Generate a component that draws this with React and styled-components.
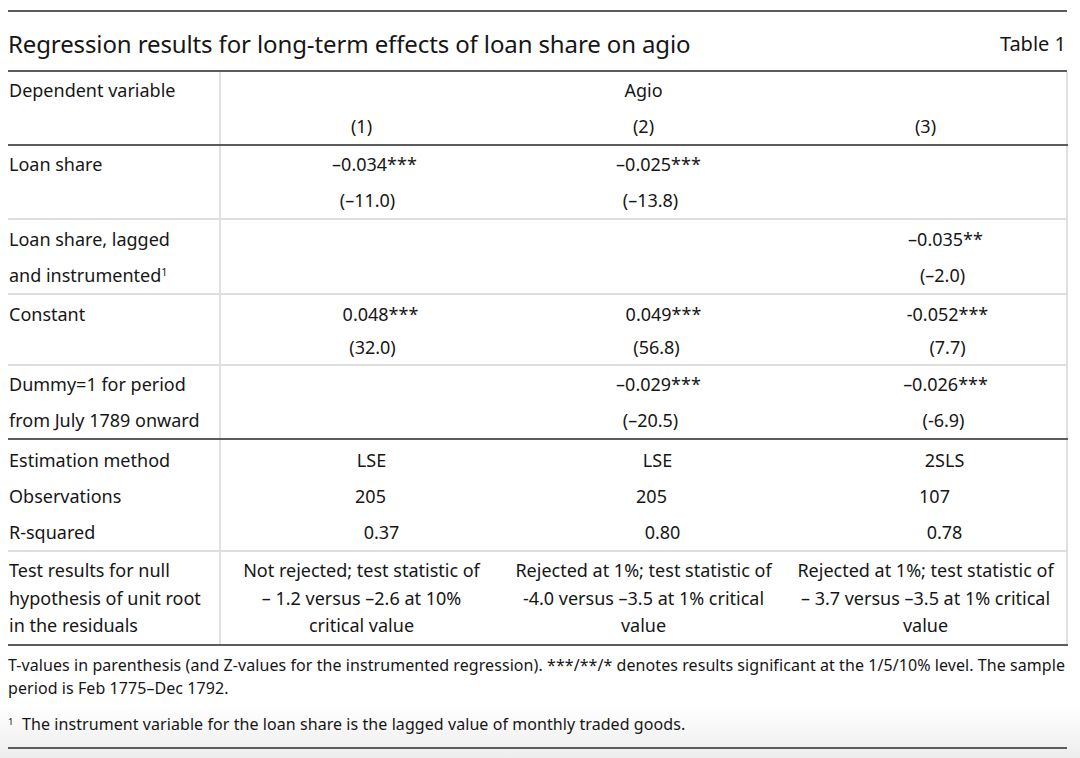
import React from 'react'
import styled, { createGlobalStyle } from 'styled-components'

// [text, shift] - shift nudges the centred value to the right like in the source table
const rows = [
  {
    label: ['Loan share'],
    lh: 36,
    pad: [0, 0],
    rule: 'light',
    cells: [
      [['–0.034***', 13], ['(–11.0)', 6]],
      [['–0.025***', 15], ['(–13.8)', 7]],
      [],
    ],
  },
  {
    label: ['Loan share, lagged', 'and instrumented'],
    note: '1',
    lh: 36,
    pad: [1, 0],
    rule: 'light',
    cells: [[], [], [['–0.035**', 20], ['(–2.0)', 17]]],
  },
  {
    label: ['Constant'],
    lh: 33,
    pad: [3, 0],
    rule: 'light',
    cells: [
      [['0.048***', 19], ['(32.0)', 11]],
      [['0.049***', 20], ['(56.8)', 13]],
      [['-0.052***', 22], ['(7.7)', 22]],
    ],
  },
  {
    label: ['Dummy=1 for period', 'from July 1789 onward'],
    lh: 36,
    pad: [0, 0],
    rule: 'dark',
    cells: [
      [],
      [['–0.029***', 15], ['(–20.5)', 7]],
      [['–0.026***', 20], ['(-6.9)', 18]],
    ],
  },
]

const stats = [
  { label: 'Estimation method', cells: [['LSE', 10], ['LSE', 14], ['2SLS', 19]] },
  { label: 'Observations', cells: [['205', 9], ['205', 8], ['107', 9]] },
  { label: 'R-squared', cells: [['0.37', 20], ['0.80', 19], ['0.78', 19]] },
]

const tests = [
  ['Not rejected; test statistic of', '– 1.2 versus –2.6 at 10%', 'critical value'],
  ['Rejected at 1%; test statistic of', '-4.0 versus –3.5 at 1% critical', 'value'],
  ['Rejected at 1%; test statistic of', '– 3.7 versus –3.5 at 1% critical', 'value'],
]

export default function App() {
  return (
    <Page>
      <GlobalStyle />
      <TopRule />
      <TitleBar>
        <Title>Regression results for long-term effects of loan share on agio</Title>
        <TableNo>Table 1</TableNo>
      </TitleBar>

      <Table>
        <colgroup>
          <col style={{ width: 212 }} />
          <col style={{ width: 282 }} />
          <col style={{ width: 283 }} />
          <col style={{ width: 282 }} />
        </colgroup>
        <tbody>
          <tr>
            <Td $first rowSpan={2} $rule="dark">
              <Line $lh={36}>Dependent variable</Line>
            </Td>
            <Td colSpan={3} $last>
              <Line $lh={36}>Agio</Line>
            </Td>
          </tr>
          <tr>
            {['(1)', '(2)', '(3)'].map((t, i) => (
              <Td key={t} $rule="dark" $last={i === 2}>
                <Line $lh={36}>{t}</Line>
              </Td>
            ))}
          </tr>

          {rows.map((row, r) => (
            <tr key={r}>
              <Td $first $rule={row.rule} $pt={row.pad[0]} $pb={row.pad[1]}>
                {row.label.map((l, i) => (
                  <Line key={i} $lh={row.lh}>
                    {l}
                    {row.note && i === row.label.length - 1 && <Sup>{row.note}</Sup>}
                  </Line>
                ))}
              </Td>
              {row.cells.map((cell, c) => (
                <Td key={c} $rule={row.rule} $pt={row.pad[0]} $pb={row.pad[1]} $last={c === 2}>
                  {cell.map(([t, s], i) => (
                    <Line key={i} $lh={row.lh} $shift={s}>{t}</Line>
                  ))}
                </Td>
              ))}
            </tr>
          ))}

          {stats.map((row, r) => (
            <tr key={row.label}>
              <Td $first $pt={r === 0 ? 2 : 0} $rule={r === 2 ? 'light' : null}>
                <Line $lh={36}>{row.label}</Line>
              </Td>
              {row.cells.map(([t, s], c) => (
                <Td key={c} $pt={r === 0 ? 2 : 0} $rule={r === 2 ? 'light' : null} $last={c === 2}>
                  <Line $lh={36} $shift={s}>{t}</Line>
                </Td>
              ))}
            </tr>
          ))}

          <tr>
            <Td $first $rule="dark" $pt={5} $pb={4}>
              <Line $lh={27.5}>Test results for null</Line>
              <Line $lh={27.5}>hypothesis of unit root</Line>
              <Line $lh={27.5}>in the residuals</Line>
            </Td>
            {tests.map((lines, c) => (
              <Td key={c} $rule="dark" $pt={5} $pb={4} $last={c === 2}>
                {lines.map((l, i) => (
                  <Line key={i} $lh={27.5}>{l}</Line>
                ))}
              </Td>
            ))}
          </tr>
        </tbody>
      </Table>

      <Notes>
        <Note>
          T-values in parenthesis (and Z-values for the instrumented regression). ***/**/* denotes results significant at the 1/5/10% level. The sample
          <br />
          period is Feb 1775–Dec 1792.
        </Note>
        <Footnote>
          <Sup>1</Sup>&nbsp; The instrument variable for the loan share is the lagged value of monthly traded goods.
        </Footnote>
      </Notes>
    </Page>
  )
}

const GlobalStyle = createGlobalStyle`
  html, body {
    margin: 0;
    padding: 0;
  }
  body {
    min-height: 758px;
    background: linear-gradient(180deg, #ffffff 0px, #ffffff 705px, #ededed 758px);
    font-family: "Noto Sans", "Open Sans", sans-serif;
    color: #161616;
  }
`

const Page = styled.div`
  width: 1059px;
  padding: 10px 13px 0 8px;
`

const TopRule = styled.div`
  border-top: 2px solid #5c5c5c;
`

const TitleBar = styled.header`
  height: 60px;
  display: flex;
  justify-content: space-between;
  align-items: center;
  padding-top: 5px;
  box-sizing: border-box;
  border-bottom: 2px solid #5c5c5c;
`

const Title = styled.h1`
  margin: 0;
  font-size: 24px;
  font-weight: 400;
  letter-spacing: -0.12px;
`

const TableNo = styled.span`
  font-size: 20px;
  padding-right: 1px;
`

const Table = styled.table`
  width: 100%;
  border-collapse: collapse;
  table-layout: fixed;
  font-size: 18px;
`

const Td = styled.td`
  padding: ${p => p.$pt || 0}px 0 ${p => p.$pb || 0}px ${p => (p.$first ? 1 : 0)}px;
  vertical-align: top;
  text-align: ${p => (p.$first ? 'left' : 'center')};
  white-space: nowrap;
  border-bottom: ${p =>
    p.$rule === 'dark' ? '2px solid #5c5c5c' : p.$rule === 'light' ? '2px solid #dedede' : 'none'};
  border-right: ${p => (p.$first || p.$last ? '2px solid #e0e0e0' : 'none')};
`

const Line = styled.div`
  height: ${p => p.$lh}px;
  line-height: ${p => p.$lh}px;
  padding-left: ${p => (p.$shift || 0) * 2}px;
`

const Sup = styled.sup`
  font-size: 0.6em;
  line-height: 0;
  vertical-align: 0.55em;
`

const Notes = styled.footer`
  padding: 8px 0 11px;
  border-bottom: 2px solid #5c5c5c;
  font-size: 16px;
  letter-spacing: 0.07px;
`

const Note = styled.p`
  margin: 0;
  line-height: 23px;
  white-space: nowrap;
`

const Footnote = styled.p`
  margin: 13px 0 0;
  line-height: 23px;
`
